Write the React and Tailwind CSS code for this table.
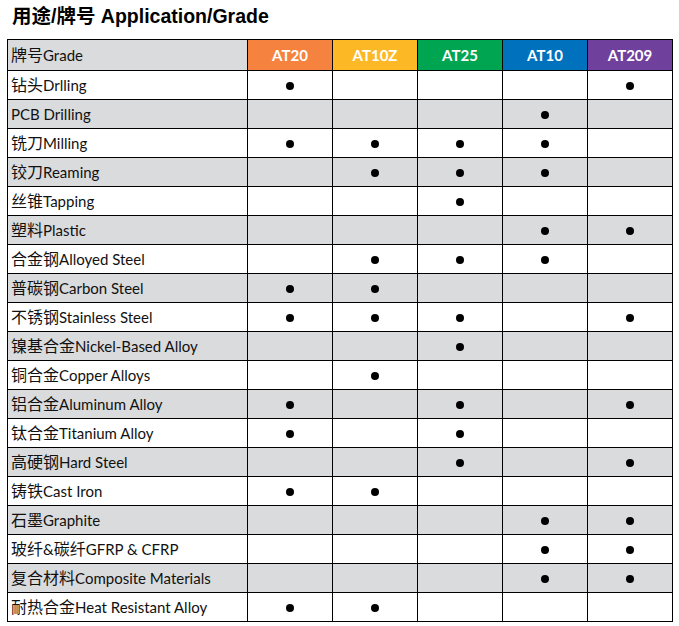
import React from "react";

const grades = [
  { name: "AT20", bg: "bg-[#f5833f]" },
  { name: "AT10Z", bg: "bg-[#fdb826]" },
  { name: "AT25", bg: "bg-[#00a551]" },
  { name: "AT10", bg: "bg-[#0071bd]" },
  { name: "AT209", bg: "bg-[#6f409c]" },
];

const rows = [
  ["钻头", "Drlling", [1, 0, 0, 0, 1]],
  ["", "PCB Drilling", [0, 0, 0, 1, 0]],
  ["铣刀", "Milling", [1, 1, 1, 1, 0]],
  ["铰刀", "Reaming", [0, 1, 1, 1, 0]],
  ["丝锥", "Tapping", [0, 0, 1, 0, 0]],
  ["塑料", "Plastic", [0, 0, 0, 1, 1]],
  ["合金钢", "Alloyed Steel", [0, 1, 1, 1, 0]],
  ["普碳钢", "Carbon Steel", [1, 1, 0, 0, 0]],
  ["不锈钢", "Stainless Steel", [1, 1, 1, 0, 1]],
  ["镍基合金", "Nickel-Based Alloy", [0, 0, 1, 0, 0]],
  ["铜合金", "Copper Alloys", [0, 1, 0, 0, 0]],
  ["铝合金", "Aluminum Alloy", [1, 0, 1, 0, 1]],
  ["钛合金", "Titanium Alloy", [1, 0, 1, 0, 0]],
  ["高硬钢", "Hard Steel", [0, 0, 1, 0, 1]],
  ["铸铁", "Cast Iron", [1, 1, 0, 0, 0]],
  ["石墨", "Graphite", [0, 0, 0, 1, 1]],
  ["玻纤&碳纤", "GFRP & CFRP", [0, 0, 0, 1, 1]],
  ["复合材料", "Composite Materials", [0, 0, 0, 1, 1]],
  ["耐热合金", "Heat Resistant Alloy", [1, 1, 0, 0, 0]],
];

const bodyFont = {
  fontFamily: '"Lato", "Noto Sans CJK SC", sans-serif',
};

function Label({ zh, en }) {
  // split CJK runs vs latin runs so CJK can be slightly larger
  const parts = zh.split(/(&)/).filter(Boolean);
  return (
    <>
      {parts.map((p, i) =>
        p === "&" ? (
          <span key={i} className="text-[15px]">&amp;</span>
        ) : (
          <span key={i} className="text-[16px]">{p}</span>
        )
      )}
      <span className="text-[15px]">{en}</span>
    </>
  );
}

export default function App() {
  return (
    <div className="w-[679px] h-[626px] bg-white relative">
      <div
        className="pl-[12px] pt-[3px] h-[39px] text-[19.5px] font-bold text-black leading-[27px]"
        style={{ fontFamily: '"Liberation Sans", "Noto Sans CJK SC", sans-serif' }}
      >
        用途/牌号 Application/Grade
      </div>
      <div
        className="ml-[7px] w-[666px] bg-black p-px grid grid-cols-[239px_repeat(5,84px)] gap-px text-[15px] text-[#111]"
        style={bodyFont}
      >
        <div className="h-[30px] bg-[#dadbdd] flex items-center pl-[3px] whitespace-nowrap">
          <Label zh="牌号" en="Grade" />
        </div>
        {grades.map((g) => (
          <div
            key={g.name}
            className={`h-[30px] ${g.bg} flex items-center justify-center text-white font-bold text-[15px]`}
          >
            {g.name}
          </div>
        ))}
        {rows.map(([zh, en, marks], i) => {
          const bg = i % 2 === 1 ? "bg-[#dadbdd]" : "bg-white";
          return (
            <React.Fragment key={en}>
              <div className={`h-[28px] ${bg} flex items-center pl-[3px] whitespace-nowrap`}>
                <Label zh={zh} en={en} />
              </div>
              {marks.map((m, j) => (
                <div key={j} className={`h-[28px] ${bg} flex items-center justify-center`}>
                  {m ? <div className="w-[8px] h-[8px] rounded-full bg-black mt-[2px]" /> : null}
                </div>
              ))}
            </React.Fragment>
          );
        })}
      </div>
    </div>
  );
}
